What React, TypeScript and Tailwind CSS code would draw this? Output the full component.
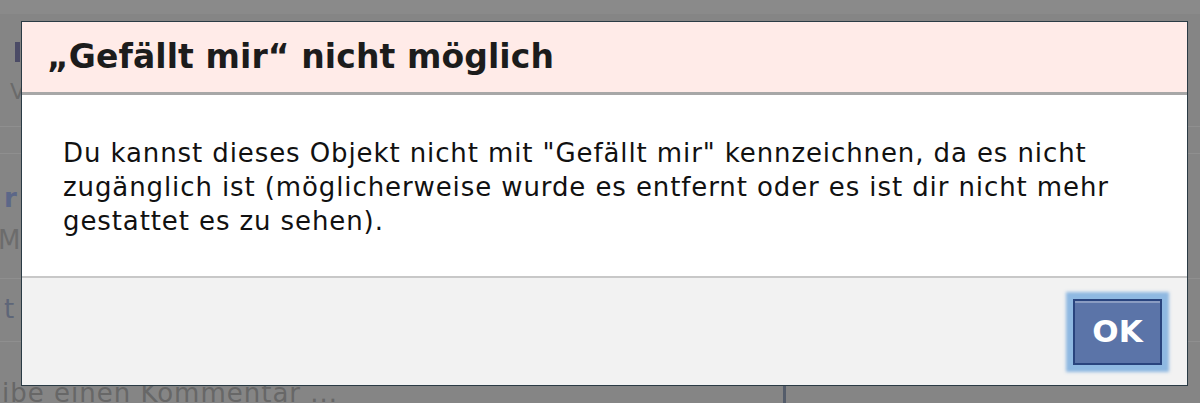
import React from 'react';

const font = { fontFamily: '"DejaVu Sans", "Liberation Sans", sans-serif' };

function PageBehind() {
  // dimmed remains of the page under the overlay
  return (
    <div className="flex h-full w-full flex-col" style={font}>
      <div className="h-[14px] w-full bg-[#8a8a8a]" />
      <div className="h-[28px]" />
      <div className="ml-[15px] h-[20px] w-[5px] bg-[#4b4b66]" />
      <div className="h-[22px]" />
      <div className="ml-[10px] text-[22px] leading-[16px] text-[#6a6a6a]">V</div>
      <div className="h-[26px]" />
      <div className="h-px w-full bg-[#8f8f8f]" />
      <div className="h-[26px]" />
      <div className="h-px w-full bg-[#8f8f8f]" />
      <div className="h-[30px]" />
      <div className="ml-[4px] text-[26px] font-bold leading-[28px] text-[#5c6788]">r</div>
      <div className="h-[14px]" />
      <div className="ml-[-2px] text-[26px] leading-[28px] text-[#6c6c6c]">Mi</div>
      <div className="h-[24px]" />
      <div className="h-px w-full bg-[#8f8f8f]" />
      <div className="h-[16px]" />
      <div className="ml-[4px] text-[26px] leading-[28px] text-[#5e6678]">t</div>
      <div className="h-[18px]" />
      <div className="h-px w-full bg-[#8f8f8f]" />
      <div className="flex-1" />
      <div className="flex h-[18px] items-start">
        <span className="ml-[2px] -mt-[5px] shrink-0 whitespace-nowrap text-[26px] leading-[26px] tracking-[1px] text-[#676767]">
          ibe einen Kommentar ...
        </span>
        <span className="ml-[445px] h-[18px] w-[3px] shrink-0 bg-[#545c6a]" />
      </div>
    </div>
  );
}

export default function App() {
  return (
    <div className="relative h-[403px] w-[1200px] overflow-hidden bg-[#858585]">
      <PageBehind />

      {/* Dialog */}
      <div
        className="absolute left-[21px] top-[21px] flex h-[365px] w-[1167px] flex-col border border-[#2a3b45] bg-white"
        style={font}
      >
        {/* Title */}
        <div className="flex h-[73px] items-center border-b-[3px] border-[#a7a7a7] bg-[#ffebe8] pl-[25px]">
          <h1 className="text-[33px] font-bold tracking-[0.1px] text-[#1c1c1c]">
            „Gefällt mir“ nicht möglich
          </h1>
        </div>

        {/* Body */}
        <div className="h-[181px] bg-white pl-[41px] pr-[30px] pt-[41px]">
          <p className="text-[26px] leading-[34px] tracking-[0.9px] text-[#111]">
            Du kannst dieses Objekt nicht mit "Gefällt mir" kennzeichnen, da es nicht
            <br />
            zugänglich ist (möglicherweise wurde es entfernt oder es ist dir nicht mehr
            <br />
            gestattet es zu sehen).
          </p>
        </div>

        {/* Footer */}
        <div className="flex flex-1 items-center justify-end border-t-[2px] border-[#c8c8c8] bg-[#f2f2f2] pr-[25px]">
          <button className="flex h-[66px] w-[89px] items-center justify-center border-2 border-[#29447e] bg-[#5b74a8] text-[31px] font-bold text-white shadow-[inset_0_2px_0_#8a9cc2,0_0_3px_7px_rgba(110,165,220,0.75)]">
            OK
          </button>
        </div>
      </div>
    </div>
  );
}
